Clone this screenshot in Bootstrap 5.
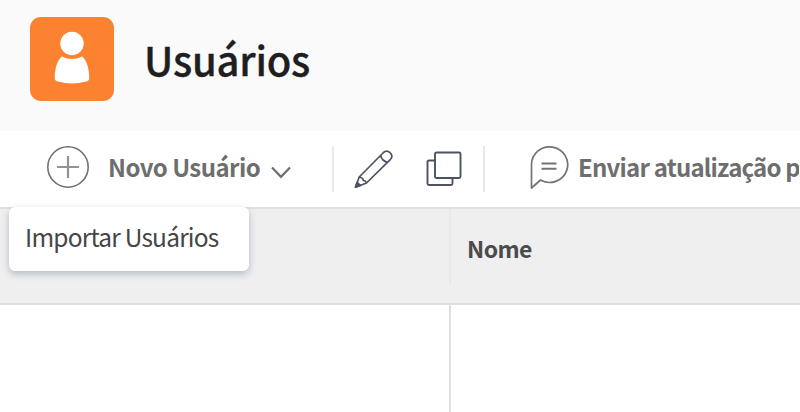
<!DOCTYPE html>
<html lang="pt-BR">
<head>
<meta charset="utf-8">
<meta name="viewport" content="width=device-width, initial-scale=1">
<title>Usuários</title>
<link rel="stylesheet" href="https://cdn.jsdelivr.net/npm/bootstrap@5.3.0/dist/css/bootstrap.min.css">
<style>
body{font-family:"Noto Sans CJK SC",sans-serif;height:412px;color:#4b4b4b}
svg{display:block;flex:none}
.page-head{height:131px;background:#fafafa;padding:17px 0 0 30px}
.page-title{font-size:40px;line-height:84px;font-weight:500;color:#1f1f1f;margin:0 0 0 30px;letter-spacing:-.2px;-webkit-text-stroke:.35px #1f1f1f}
.app-icon{width:84px;height:84px}
.toolbar{height:78px;border-bottom:2px solid #e1e1e1;padding-left:47px}
.tool-label{flex:none;margin-top:19px;font-size:24px;line-height:34px;font-weight:700;color:#6e6e6e;white-space:nowrap;letter-spacing:-.55px}
.new-label{width:152px;margin-left:19px}
.send-label{margin-left:9px;width:221px;overflow:hidden;letter-spacing:-.8px}
.sep{flex:none;width:2px;height:46px;background:#e9e9e9;margin-top:15px}
.sep-a{margin-left:41px}.sep-b{margin-left:21px}
.i-plus{margin-top:15px}.i-chev{margin:35px 0 0 11px}.i-pen{margin:18px 0 0 20px}.i-copy{margin:20px 0 0 32px}.i-chat{margin:15px 0 0 44px}
.grid-head{height:96px;background:#efefef;border-bottom:2px solid #e0e0e0}
.first-col{width:449px}
.head-cell{height:75px;border-left:2px solid #e8e8e8;padding-left:16px;font-size:23px;line-height:78px;font-weight:700;letter-spacing:-.6px}
.body-cell{border-left:2px solid #e0e0e0}
.drop{left:9px;top:207px;width:240px;min-width:0;height:64px;padding:0;border:0;border-radius:6px;box-shadow:0 3px 7px rgba(80,105,130,.38)}
.drop .dropdown-item{padding:1px 0 0 16px;font-size:24.5px;line-height:58px;color:#464646;font-weight:400;letter-spacing:-.8px}
</style>
</head>
<body class="bg-white position-relative overflow-hidden d-flex flex-column">
<header class="page-head d-flex flex-shrink-0 align-items-start">
  <svg class="app-icon" viewBox="0 0 84 84"><rect width="84" height="84" rx="11" fill="#fa8231"/><circle cx="42" cy="26.500" r="11.700" fill="#fff"/><path d="M32 39.500Q42 44.500 52 39.500C57 43 59.500 53 59.200 61.500Q59 64 56 64.500Q42 68.500 28 64.500Q25 64 24.800 61.500C24.500 53 27 43 32 39.500Z" fill="#fff"/></svg>
  <h1 class="page-title">Usuários</h1>
</header>
<nav class="toolbar d-flex flex-shrink-0 align-items-start">
  <svg class="i-plus" width="42" height="42" viewBox="0 0 42 42" fill="none" stroke="#707070"><circle cx="21" cy="21" r="20.200" stroke-width="1.600"/><path d="M21 10v22M10 21h22" stroke-width="2.200" stroke="#929292"/></svg>
  <div class="tool-label new-label">Novo Usuário</div>
  <svg class="i-chev" width="20" height="14" viewBox="0 0 20 14" fill="none" stroke="#6e6e6e" stroke-width="2.200"><path d="M1 1.500 10 10.800 19 1.500"/></svg>
  <div class="sep sep-a"></div>
  <svg class="i-pen" width="40" height="40" viewBox="0 0 40 40" fill="none" stroke="#4b5261" stroke-width="1.700" stroke-linejoin="round"><path d="M1.500 38.200 5.200 28 29.500 3.500Q32.800 .500 36 3.700Q39.500 7 36.500 10.300L12.500 34ZM26.500 6.500Q28 12 33.500 13.300M5.200 28Q9.500 29 9.300 31.500Q11.500 31.500 12.500 34"/><path d="M1.500 38.200 3 33.500 6.500 36.500Z" fill="#4b5261"/></svg>
  <svg class="i-copy" width="36" height="36" viewBox="0 0 36 36" fill="none" stroke="#4b5261" stroke-width="1.900"><rect x="9" y="1.500" width="25.500" height="25.500" rx="1.500"/><path d="M9 9.500H3Q1.500 9.500 1.500 11V32.500Q1.500 34 3 34H25Q26.500 34 26.500 32.500V27"/></svg>
  <div class="sep sep-b"></div>
  <svg class="i-chat" width="40" height="44" viewBox="0 0 40 44" fill="none" stroke="#747474" stroke-width="1.700" stroke-linejoin="round"><path d="M2.500 42V19A18.100 17.800 0 1 1 11.500 34Z"/><path d="M12.500 17.500h15M12.500 22.800h15" stroke-width="2"/></svg>
  <div class="tool-label send-label">Enviar atualização p</div>
</nav>
<main class="d-flex flex-column flex-grow-1">
  <div class="grid-head d-flex flex-shrink-0"><div class="first-col"></div><div class="head-cell">Nome</div></div>
  <div class="d-flex flex-grow-1"><div class="first-col"></div><div class="body-cell flex-grow-1"></div></div>
</main>
<div class="drop dropdown-menu show position-absolute"><a class="dropdown-item" href="#">Importar Usuários</a></div>
<script src="https://cdn.jsdelivr.net/npm/bootstrap@5.3.0/dist/js/bootstrap.bundle.min.js"></script>
</body>
</html>
